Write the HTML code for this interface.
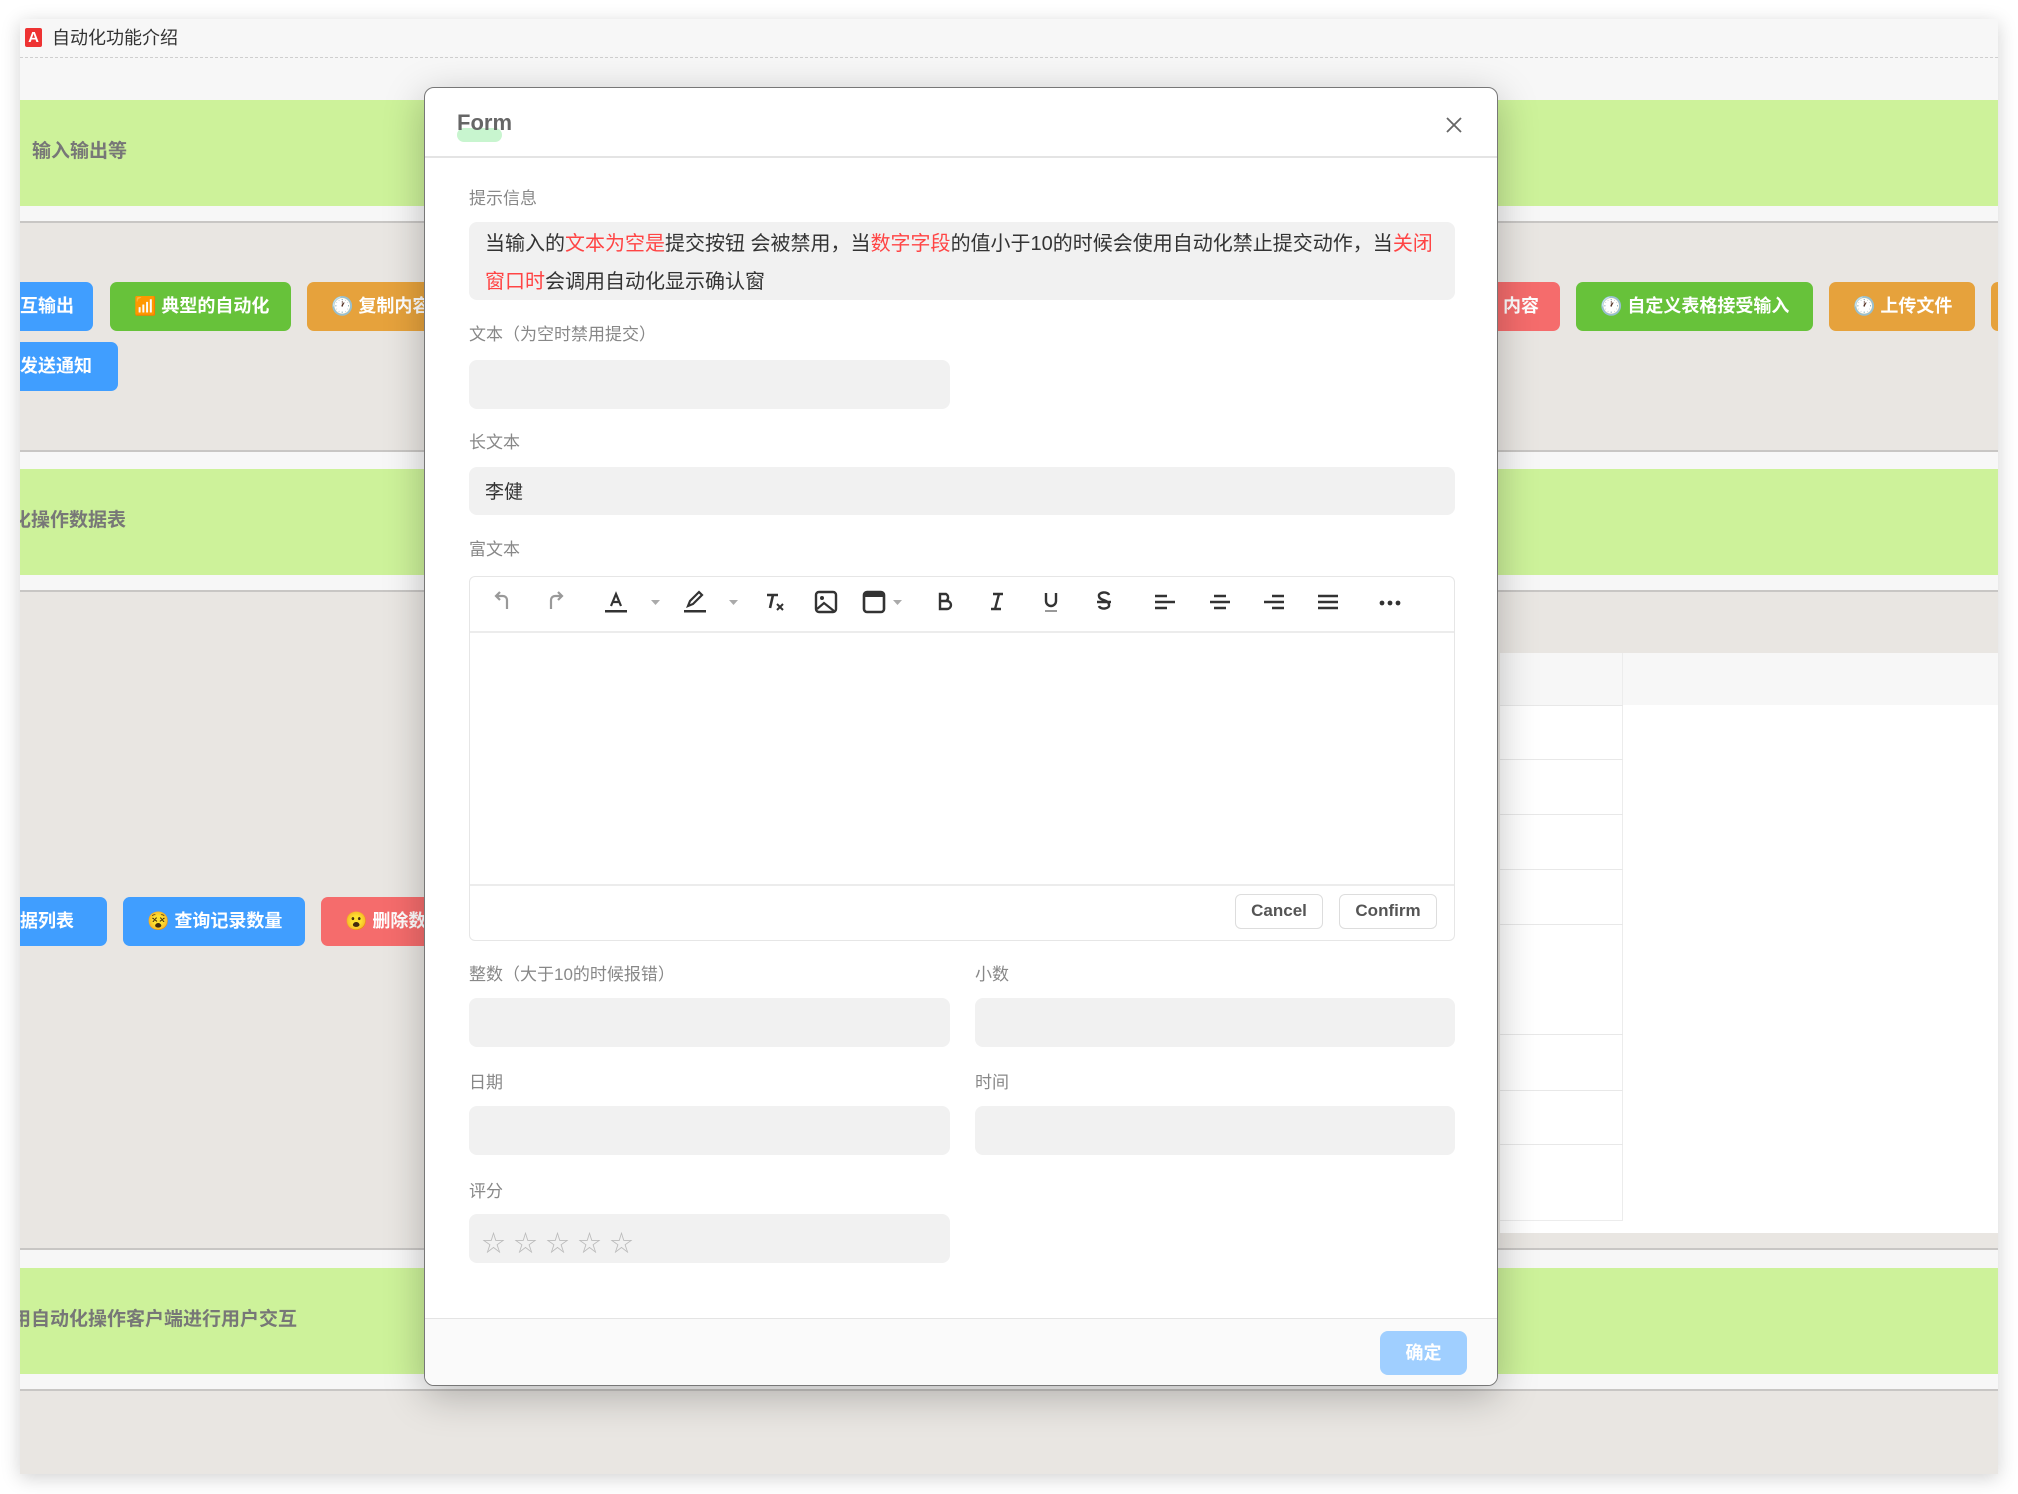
<!DOCTYPE html>
<html><head><meta charset="utf-8"><style>
*{margin:0;padding:0;box-sizing:border-box}
body{width:2018px;height:1494px;background:#fff;position:relative;overflow:hidden;font-family:"Liberation Sans","Noto Sans CJK SC",sans-serif}
.a{position:absolute}
.win{left:20px;top:19px;width:1978px;height:1455px;background:#f7f7f7;box-shadow:0 4px 18px rgba(0,0,0,.18);overflow:hidden}
.gray{background:#e9e6e2}
.green{background:#cdf29a}
.line{height:2px;background:#c8c6c4}
.btn{height:49px;border-radius:7px;color:#fff;font-size:18px;font-weight:bold;line-height:49px;white-space:nowrap;overflow:hidden;padding:0 24px}
.b{background:#409eff}.g{background:#67c23a}.o{background:#e6a23c}.r{background:#f56c6c}
.sec{font-size:19px;color:#777;font-weight:bold}
.modal{left:424px;top:87px;width:1074px;height:1299px;background:#fff;border:1.5px solid #777;border-radius:10px;box-shadow:0 10px 40px rgba(0,0,0,.25);overflow:hidden}
.lbl{font-size:17px;color:#888}
.inp{background:#f1f1f1;border-radius:8px}
.tb svg{position:absolute;top:589px}
</style></head><body>
<div class="a win">
  <div class="a" style="left:5px;top:9px;width:17px;height:19px;background:#e33;color:#fff;font-size:15px;font-weight:bold;text-align:center;line-height:19px;border-radius:2px">A</div>
  <div class="a" style="left:32px;top:5px;font-size:18px;color:#333">自动化功能介绍</div>
  <div class="a" style="left:0;top:38px;width:1978px;border-top:1.5px dashed #cfcfcf"></div>
  <div class="a green" style="left:0;top:81px;width:1978px;height:106px"></div>
  <div class="a sec" style="left:12px;top:117px">输入输出等</div>
  <div class="a line" style="left:0;top:202px;width:1978px"></div>
  <div class="a gray" style="left:0;top:204px;width:1978px;height:227px"></div>
  <div class="a btn b" style="left:-40px;top:263px;width:113px;padding-left:40px">互输出</div>
  <div class="a btn g" style="left:90px;top:263px;width:181px">📶 典型的自动化</div>
  <div class="a btn o" style="left:287px;top:263px;width:160px">🕐 复制内容</div>
  <div class="a btn r" style="left:1380px;top:263px;width:160px;padding-left:103px">内容</div>
  <div class="a btn g" style="left:1556px;top:263px;width:237px">🕐 自定义表格接受输入</div>
  <div class="a btn o" style="left:1809px;top:263px;width:146px">🕐 上传文件</div>
  <div class="a btn o" style="left:1971px;top:263px;width:30px"></div>
  <div class="a btn b" style="left:-40px;top:323px;width:138px;padding-left:40px">发送通知</div>
  <div class="a line" style="left:0;top:431px;width:1978px"></div>
  <div class="a green" style="left:0;top:450px;width:1978px;height:106px"></div>
  <div class="a sec" style="left:-8px;top:486px">化操作数据表</div>
  <div class="a line" style="left:0;top:571px;width:1978px"></div>
  <div class="a gray" style="left:0;top:573px;width:1978px;height:656px"></div>
  <div class="a" style="left:1480px;top:634px;width:498px;height:580px;background:#fff"></div>
  <div class="a" style="left:1480px;top:634px;width:498px;height:52px;background:#f7f7f7"></div>
  <div class="a" style="left:1480px;top:634px;width:123px;height:568px;border-right:1.5px solid #ececec;border-bottom:1.5px solid #ececec"></div>
  <div class="a" style="left:1480px;top:686px;width:123px;height:1px;background:#e8e8e8"></div>
  <div class="a" style="left:1480px;top:740px;width:123px;height:1px;background:#e8e8e8"></div>
  <div class="a" style="left:1480px;top:795px;width:123px;height:1px;background:#e8e8e8"></div>
  <div class="a" style="left:1480px;top:850px;width:123px;height:1px;background:#e8e8e8"></div>
  <div class="a" style="left:1480px;top:905px;width:123px;height:1px;background:#e8e8e8"></div>
  <div class="a" style="left:1480px;top:1015px;width:123px;height:1px;background:#e8e8e8"></div>
  <div class="a" style="left:1480px;top:1071px;width:123px;height:1px;background:#e8e8e8"></div>
  <div class="a" style="left:1480px;top:1125px;width:123px;height:1px;background:#e8e8e8"></div>
  <div class="a btn b" style="left:-40px;top:878px;width:127px;padding-left:40px">据列表</div>
  <div class="a btn b" style="left:103px;top:878px;width:182px">😵 查询记录数量</div>
  <div class="a btn r" style="left:301px;top:878px;width:160px">😮 删除数据</div>
  <div class="a line" style="left:0;top:1229px;width:1978px"></div>
  <div class="a green" style="left:0;top:1249px;width:1978px;height:106px"></div>
  <div class="a sec" style="left:-8px;top:1285px">用自动化操作客户端进行用户交互</div>
  <div class="a line" style="left:0;top:1370px;width:1978px"></div>
  <div class="a gray" style="left:0;top:1372px;width:1978px;height:90px"></div>
</div>

<div class="a modal">
  <div class="a" style="left:32px;top:40px;width:45px;height:14px;background:#c8f5cf;border-radius:7px"></div>
  <div class="a" style="left:32px;top:22px;font-size:22px;font-weight:bold;color:#666">Form</div>
  <svg class="a" style="left:1020px;top:28px" width="18" height="18" viewBox="0 0 18 18"><path d="M2 2L16 16M16 2L2 16" stroke="#666" stroke-width="1.8"/></svg>
  <div class="a" style="left:0;top:68px;width:1074px;height:2px;background:#e4e4e4"></div>

  <div class="a lbl" style="left:44px;top:96px">提示信息</div>
  <div class="a inp" style="left:44px;top:134px;width:986px;height:78px"></div>
  <div class="a" style="left:60px;top:137px;font-size:20px;color:#333;white-space:nowrap;line-height:38px">当输入的<span style="color:#f44">文本为空是</span>提交按钮 会被禁用，当<span style="color:#f44">数字字段</span>的值小于10的时候会使用自动化禁止提交动作，当<span style="color:#f44">关闭</span><br><span style="color:#f44">窗口时</span>会调用自动化显示确认窗</div>

  <div class="a lbl" style="left:44px;top:232px">文本（为空时禁用提交）</div>
  <div class="a inp" style="left:44px;top:272px;width:481px;height:49px"></div>
  <div class="a lbl" style="left:44px;top:340px">长文本</div>
  <div class="a inp" style="left:44px;top:379px;width:986px;height:48px"></div>
  <div class="a" style="left:60px;top:389px;font-size:19px;color:#333">李健</div>
  <div class="a lbl" style="left:44px;top:447px">富文本</div>
  <div class="a" style="left:44px;top:488px;width:986px;height:365px;border:1.5px solid #e6e6e6;border-radius:6px"></div>
  <div class="a" style="left:45px;top:543px;width:984px;height:2px;background:#ececec"></div>
  <div class="a" style="left:45px;top:796px;width:984px;height:2px;background:#ececec"></div>
  <div class="a" style="left:810px;top:806px;width:88px;height:35px;border:1.5px solid #ddd;border-radius:6px;font-size:17px;font-weight:bold;color:#555;text-align:center;line-height:32px">Cancel</div>
  <div class="a" style="left:914px;top:806px;width:98px;height:35px;border:1.5px solid #ddd;border-radius:6px;font-size:17px;font-weight:bold;color:#555;text-align:center;line-height:32px">Confirm</div>

  <div class="a lbl" style="left:44px;top:872px">整数（大于10的时候报错）</div>
  <div class="a lbl" style="left:550px;top:872px">小数</div>
  <div class="a inp" style="left:44px;top:910px;width:481px;height:49px"></div>
  <div class="a inp" style="left:550px;top:910px;width:480px;height:49px"></div>
  <div class="a lbl" style="left:44px;top:980px">日期</div>
  <div class="a lbl" style="left:550px;top:980px">时间</div>
  <div class="a inp" style="left:44px;top:1018px;width:481px;height:49px"></div>
  <div class="a inp" style="left:550px;top:1018px;width:480px;height:49px"></div>
  <div class="a lbl" style="left:44px;top:1089px">评分</div>
  <div class="a inp" style="left:44px;top:1126px;width:481px;height:49px"></div>
  <div class="a" style="left:57px;top:1136px;font-size:23px;color:#bbb;letter-spacing:9px">☆☆☆☆☆</div>

  <div class="a" style="left:0;top:1230px;width:1074px;height:70px;background:#fafafa;border-top:1.5px solid #e4e4e4"></div>
  <div class="a" style="left:955px;top:1243px;width:87px;height:44px;background:#a0cfff;border-radius:8px;color:#fff;font-size:18px;font-weight:bold;text-align:center;line-height:44px">确定</div>
</div>

<div class="tb">
<svg class="a" style="left:492px" width="22" height="26" viewBox="0 0 22 26"><path d="M15 20V11a4 4 0 0 0-4-4H5M8 3L4 7l4 4" fill="none" stroke="#999" stroke-width="2.2"/></svg>
<svg class="a" style="left:544px" width="22" height="26" viewBox="0 0 22 26"><path d="M7 20V11a4 4 0 0 1 4-4h6M14 3l4 4-4 4" fill="none" stroke="#999" stroke-width="2.2"/></svg>
<svg class="a" style="left:604px" width="24" height="26" viewBox="0 0 24 26"><path d="M7 17L12 5l5 12M9 13h6" fill="none" stroke="#333" stroke-width="2.2"/><rect x="1" y="21" width="22" height="2.5" fill="#333"/></svg>
<svg class="a" style="left:649px" width="14" height="26" viewBox="0 0 14 26"><path d="M2 11h9l-4.5 5z" fill="#aaa"/></svg>
<svg class="a" style="left:682px" width="26" height="26" viewBox="0 0 26 26"><path d="M6 17l2-5 9-9 3 3-9 9z" fill="none" stroke="#333" stroke-width="2.2"/><rect x="2" y="21" width="22" height="2.5" fill="#333"/></svg>
<svg class="a" style="left:727px" width="14" height="26" viewBox="0 0 14 26"><path d="M2 11h9l-4.5 5z" fill="#aaa"/></svg>
<svg class="a" style="left:763px" width="24" height="26" viewBox="0 0 24 26"><path d="M4 6h11M10 6L7 19" fill="none" stroke="#333" stroke-width="2.6"/><path d="M14 15l6 6M20 15l-6 6" stroke="#333" stroke-width="2"/></svg>
<svg class="a" style="left:814px" width="24" height="26" viewBox="0 0 24 26"><rect x="2" y="3" width="20" height="20" rx="3" fill="none" stroke="#333" stroke-width="2.4"/><circle cx="8" cy="9" r="2" fill="#333"/><path d="M3 20l7-6 10 8" fill="none" stroke="#333" stroke-width="2.2"/></svg>
<svg class="a" style="left:862px" width="24" height="26" viewBox="0 0 24 26"><rect x="2" y="3" width="20" height="20" rx="3" fill="none" stroke="#333" stroke-width="2.6"/><rect x="2" y="3" width="20" height="5" fill="#333"/></svg>
<svg class="a" style="left:891px" width="14" height="26" viewBox="0 0 14 26"><path d="M2 11h9l-4.5 5z" fill="#aaa"/></svg>
<svg class="a" style="left:936px" width="18" height="26" viewBox="0 0 18 26"><path d="M4 5h6a4 4 0 0 1 0 7H4zM4 12h7a4 4 0 0 1 0 8H4z" fill="none" stroke="#333" stroke-width="2.4"/></svg>
<svg class="a" style="left:988px" width="18" height="26" viewBox="0 0 18 26"><path d="M5 5h10M3 20h10M11 5L7 20" fill="none" stroke="#333" stroke-width="2.4"/></svg>
<svg class="a" style="left:1042px" width="18" height="26" viewBox="0 0 18 26"><path d="M4 4v8a5 5 0 0 0 10 0V4" fill="none" stroke="#333" stroke-width="2.4"/><rect x="3" y="21" width="12" height="2" fill="#999"/></svg>
<svg class="a" style="left:1095px" width="18" height="26" viewBox="0 0 18 26"><path d="M14 6a5 3 0 0 0-10 1c0 5 10 3 10 9a5 3 0 0 1-10 1M2 13h14" fill="none" stroke="#333" stroke-width="2.4"/></svg>
<svg class="a" style="left:1153px" width="24" height="26" viewBox="0 0 24 26"><path d="M2 7h12M2 13h20M2 19h12" stroke="#333" stroke-width="2.6"/></svg>
<svg class="a" style="left:1208px" width="24" height="26" viewBox="0 0 24 26"><path d="M6 7h12M2 13h20M6 19h12" stroke="#333" stroke-width="2.6"/></svg>
<svg class="a" style="left:1262px" width="24" height="26" viewBox="0 0 24 26"><path d="M10 7h12M2 13h20M10 19h12" stroke="#333" stroke-width="2.6"/></svg>
<svg class="a" style="left:1316px" width="24" height="26" viewBox="0 0 24 26"><path d="M2 7h20M2 13h20M2 19h20" stroke="#333" stroke-width="2.6"/></svg>
<svg class="a" style="left:1378px" width="24" height="26" viewBox="0 0 24 26"><circle cx="4" cy="14" r="2.4" fill="#333"/><circle cx="12" cy="14" r="2.4" fill="#333"/><circle cx="20" cy="14" r="2.4" fill="#333"/></svg>
</div>
</body></html>
